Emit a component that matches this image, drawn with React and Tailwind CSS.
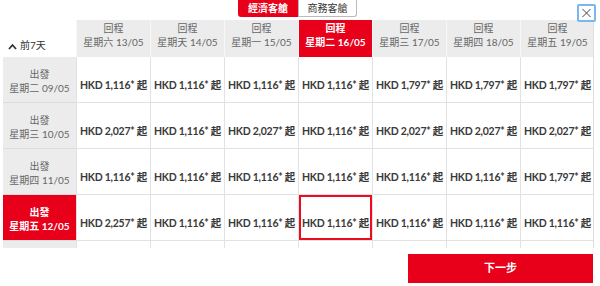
import { X } from "lucide-react";

const RED = "bg-[#e8001b]";

const returns = [
  ["星期六", "13/05"],
  ["星期天", "14/05"],
  ["星期一", "15/05"],
  ["星期二", "16/05"],
  ["星期三", "17/05"],
  ["星期四", "18/05"],
  ["星期五", "19/05"],
];

const rows = [
  { day: "星期二 09/05", prices: ["1,116", "1,116", "1,116", "1,116", "1,797", "1,797", "1,797"] },
  { day: "星期三 10/05", prices: ["2,027", "1,116", "2,027", "1,116", "2,027", "2,027", "2,027"] },
  { day: "星期四 11/05", prices: ["1,116", "1,116", "1,116", "1,116", "1,116", "1,116", "1,797"] },
  { day: "星期五 12/05", prices: ["2,257", "1,116", "1,116", "1,116", "1,116", "1,116", "1,116"], active: true },
];

const SEL_COL = 3;

export default function App() {
  return (
    <div
      className="relative w-[600px] h-[286px] bg-white overflow-hidden"
      style={{ fontFamily: "Lato, 'Noto Sans CJK TC', sans-serif" }}
    >
      {/* cabin tabs */}
      <div className="flex justify-center h-[20px] pl-[179px] pr-[184px]">
        <div className="flex h-[17px]">
          <button className={`w-[60px] ${RED} text-white text-[10px] font-bold rounded-bl-[3px] leading-[17px] whitespace-nowrap`}>
            經濟客艙
          </button>
          <button className="w-[59px] bg-white text-[#333] text-[10px] border border-t-0 border-[#bbb] rounded-br-[3px] leading-[15px] whitespace-nowrap">
            商務客艙
          </button>
        </div>
      </div>

      <button className="absolute top-[4px] left-[577px] w-[19px] h-[18px] border-2 border-[#79b6f2] rounded-[2px] flex items-center justify-center bg-white">
        <X className="w-[16px] h-[16px] text-[#444]" strokeWidth={1.6} />
      </button>

      {/* table */}
      <div className="ml-[3px] w-[591px] h-[228px] overflow-hidden border-r border-[#dedede]">
        <div className="grid grid-cols-[73px_repeat(7,74px)] h-[37px]">
          <div className="bg-white flex items-end pb-[4px] pl-[5px] gap-[3px] text-[10px] text-[#333] whitespace-nowrap">
            <svg width="9" height="7" viewBox="0 0 9 7" className="mb-[3px]">
              <path d="M1 6 L4.5 2 L8 6" fill="none" stroke="#333" strokeWidth="1.8" />
            </svg>
            <span>前7天</span>
          </div>
          {returns.map(([d, date], i) => (
            <div
              key={i}
              className={`flex flex-col items-center justify-start pt-[1px] text-[10px] leading-[14px] whitespace-nowrap border-l border-[#f7f7f7] ${
                i === SEL_COL ? `${RED} text-white font-bold` : "bg-[#ececec] text-[#666]"
              }`}
            >
              <span>回程</span>
              <span>
                {d} {date}
              </span>
            </div>
          ))}
        </div>

        {rows.map((r, ri) => (
          <div key={ri} className="grid grid-cols-[73px_repeat(7,74px)] h-[46px]">
            <div
              className={`flex flex-col items-center justify-center pt-[3px] text-[10px] leading-[14px] whitespace-nowrap border-b border-[#dcdcdc] ${
                r.active ? `${RED} text-white font-bold` : "bg-[#ececec] text-[#666]"
              }`}
            >
              <span>出發</span>
              <span>{r.day}</span>
            </div>
            {r.prices.map((p, ci) => (
              <div
                key={ci}
                className={`flex items-center justify-center pt-[12px] text-[10.5px] tracking-[-0.25px] font-bold text-[#3a3a3a] whitespace-nowrap border-l border-b border-[#e2e2e2] ${
                  r.active && ci === SEL_COL ? "shadow-[inset_0_0_0_2px_#ee0a1f]" : ""
                }`}
              >
                HKD {p}* 起
              </div>
            ))}
          </div>
        ))}

        {/* next row, scrolled out of view */}
        <div className="grid grid-cols-[73px_repeat(7,74px)] h-[46px]">
          <div className="bg-[#ececec]" />
          {returns.map((_, i) => (
            <div key={i} className="border-l border-[#e2e2e2]" />
          ))}
        </div>
      </div>

      {/* next step */}
      <div className="flex justify-end pr-[7px] mt-[6px]">
        <button className={`w-[185px] h-[29px] ${RED} text-white text-[11px] font-bold`}>下一步</button>
      </div>
    </div>
  );
}
